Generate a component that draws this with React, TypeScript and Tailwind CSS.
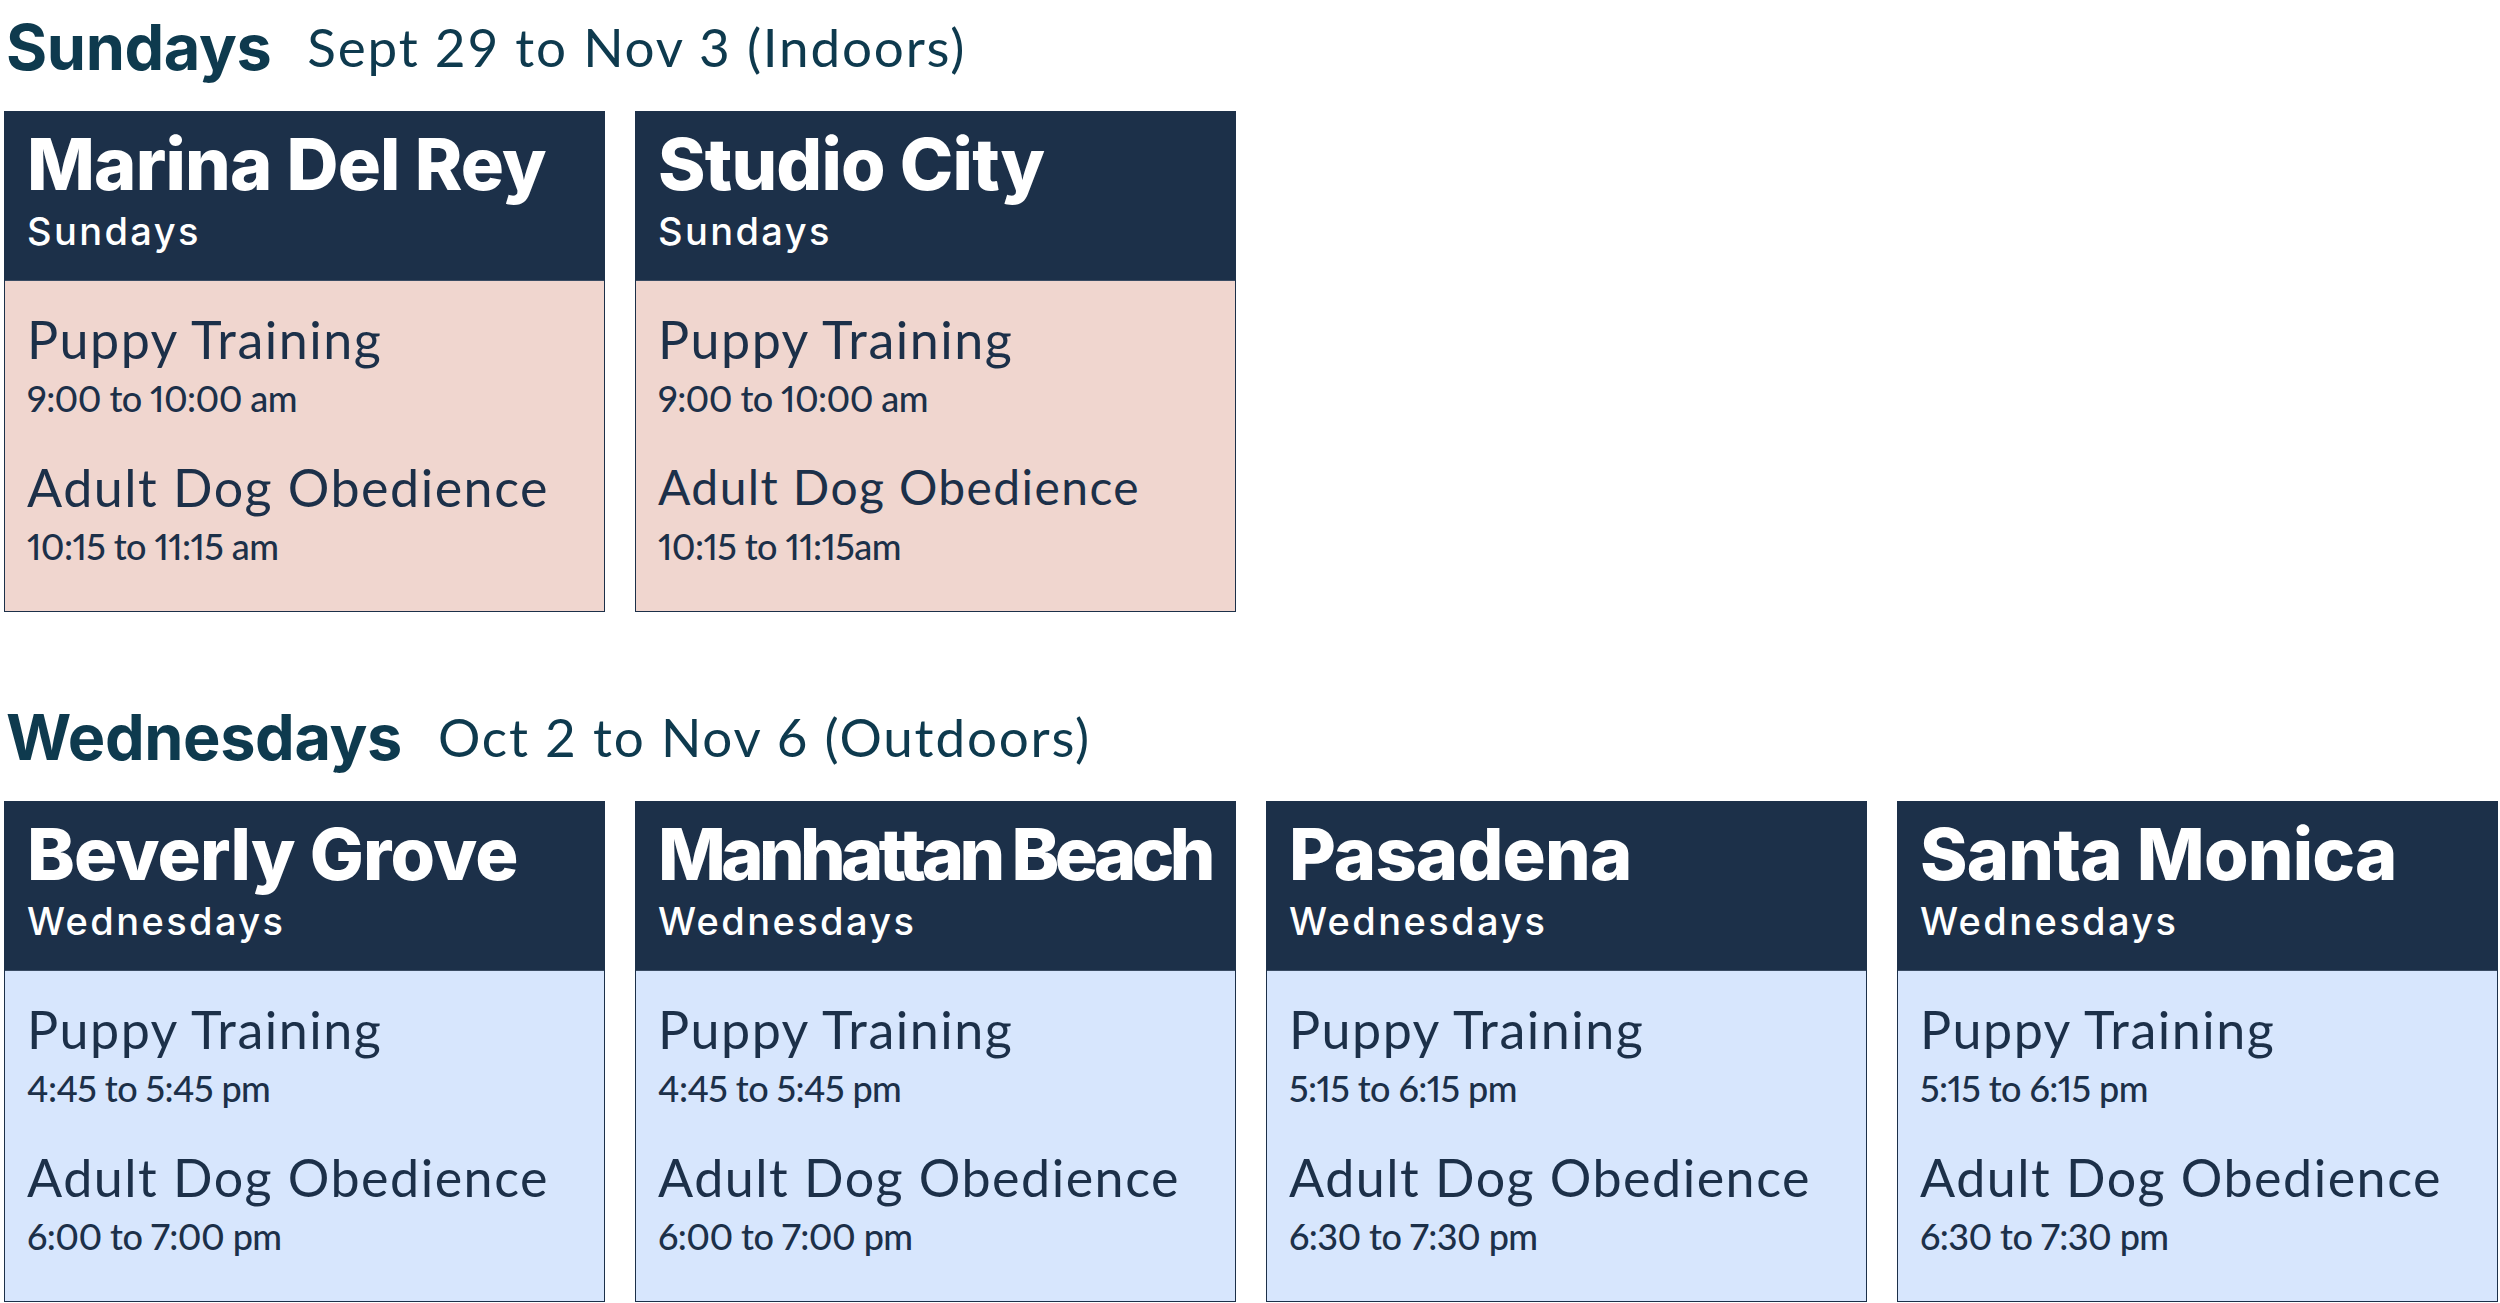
import React from "react";

type Cls = { name: string; time: string; small?: boolean };
type Loc = { name: string; day: string; classes: Cls[]; tight?: boolean };

const sundays: Loc[] = [
  {
    name: "Marina Del Rey",
    day: "Sundays",
    classes: [
      { name: "Puppy Training", time: "9:00 to 10:00 am" },
      { name: "Adult Dog Obedience", time: "10:15 to 11:15 am" },
    ],
  },
  {
    name: "Studio City",
    day: "Sundays",
    classes: [
      { name: "Puppy Training", time: "9:00 to 10:00 am" },
      { name: "Adult Dog Obedience", time: "10:15 to 11:15am", small: true },
    ],
  },
];

const wednesdays: Loc[] = [
  {
    name: "Beverly Grove",
    day: "Wednesdays",
    classes: [
      { name: "Puppy Training", time: "4:45 to 5:45 pm" },
      { name: "Adult Dog Obedience", time: "6:00 to 7:00 pm" },
    ],
  },
  {
    name: "Manhattan Beach",
    day: "Wednesdays",
    tight: true,
    classes: [
      { name: "Puppy Training", time: "4:45 to 5:45 pm" },
      { name: "Adult Dog Obedience", time: "6:00 to 7:00 pm" },
    ],
  },
  {
    name: "Pasadena",
    day: "Wednesdays",
    classes: [
      { name: "Puppy Training", time: "5:15 to 6:15 pm" },
      { name: "Adult Dog Obedience", time: "6:30 to 7:30 pm" },
    ],
  },
  {
    name: "Santa Monica",
    day: "Wednesdays",
    classes: [
      { name: "Puppy Training", time: "5:15 to 6:15 pm" },
      { name: "Adult Dog Obedience", time: "6:30 to 7:30 pm" },
    ],
  },
];

function Card({ loc, pink }: { loc: Loc; pink: boolean }) {
  const c1 = loc.classes[1];
  return (
    <div className="flex flex-col border border-[#1c3049]">
      <div className="h-[168px] bg-[#1c3049] pl-[22px] pt-[16px] text-white">
        <div
          className={
            (loc.tight ? "tracking-[-4.7px] " : "tracking-[-0.8px] ") +
            "font-['Inter',sans-serif] text-[72px] font-extrabold leading-none whitespace-nowrap"
          }
        >
          {loc.name}
        </div>
        <div className="mt-[12px] font-['Inter',sans-serif] text-[38px] font-medium leading-none tracking-[2.4px]">
          {loc.day}
        </div>
      </div>
      <div
        className={
          (pink ? "bg-[#f0d6cf] " : "bg-[#d7e6fd] ") +
          "h-[331px] border-t border-[#3a4c63] pl-[22px] pt-[32px] text-[#1c3049] font-['Lato',sans-serif]"
        }
      >
        <div className="text-[52px] leading-none tracking-[1.5px] whitespace-nowrap">{loc.classes[0].name}</div>
        <div className="mt-[15px] text-[36px] font-medium leading-none tracking-[-0.6px] proportional-nums">
          {loc.classes[0].time}
        </div>
        {c1.small ? (
          <div className="mt-[47px] h-[50px] text-[48px] leading-none tracking-[1.4px] whitespace-nowrap">{c1.name}</div>
        ) : (
          <div className="mt-[45px] text-[52px] leading-none tracking-[1.5px] whitespace-nowrap">{c1.name}</div>
        )}
        <div className="mt-[15px] text-[36px] font-medium leading-none tracking-[-0.6px] proportional-nums">
          {c1.time}
        </div>
      </div>
    </div>
  );
}

function Section({ day, range, locs, pink }: { day: string; range: string; locs: Loc[]; pink: boolean }) {
  return (
    <div>
      <div className="flex h-[111px] items-start pt-[9px] pl-[6px] text-[#0e3a4e] whitespace-nowrap">
        <span className="font-['Inter',sans-serif] text-[63px] font-bold leading-[76px] tracking-[-0.4px]">{day}</span>
        <span className="ml-[36px] font-['Lato',sans-serif] text-[53px] leading-[76px] tracking-[1.8px]">{range}</span>
      </div>
      <div className="grid grid-cols-[601px_601px_601px_601px] gap-x-[30px] pl-[4px]">
        {locs.map((l) => (
          <Card key={l.name} loc={l} pink={pink} />
        ))}
      </div>
    </div>
  );
}

export default function App() {
  return (
    <div className="h-[1303px] w-[2500px] overflow-hidden bg-white">
      <Section day="Sundays" range="Sept 29 to Nov 3 (Indoors)" locs={sundays} pink={true} />
      <div className="h-[78px]" />
      <Section day="Wednesdays" range="Oct 2 to Nov 6 (Outdoors)" locs={wednesdays} pink={false} />
    </div>
  );
}
